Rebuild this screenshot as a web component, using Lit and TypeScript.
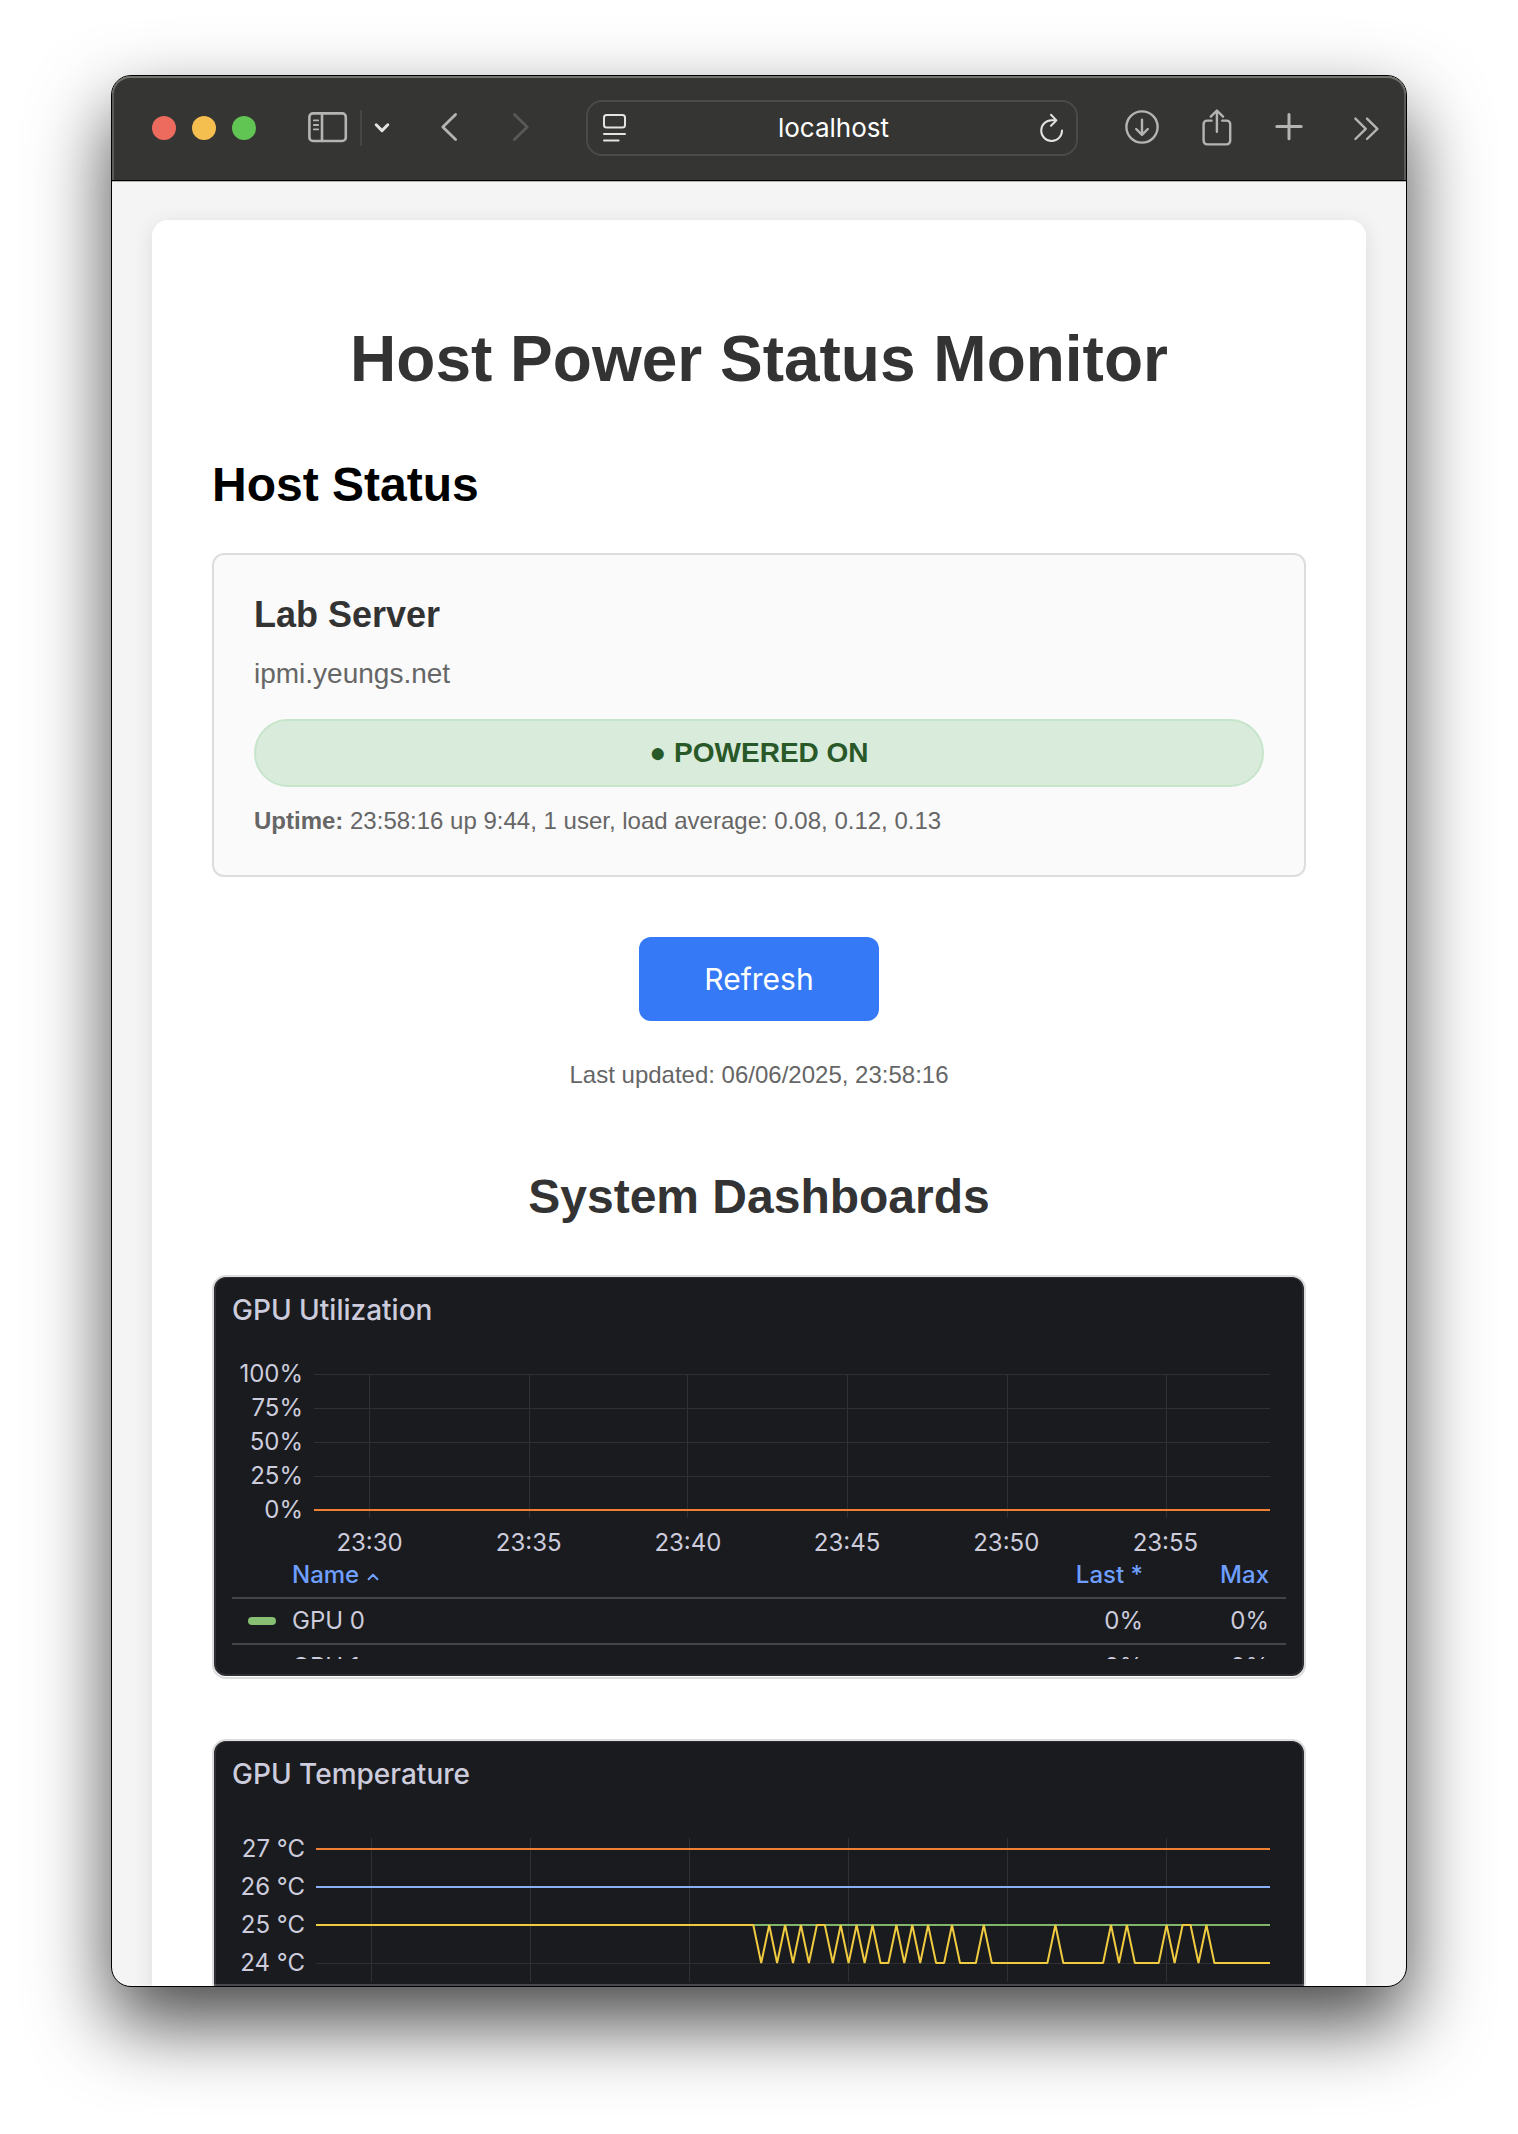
import { LitElement, html, css, svg } from "lit";
import { customElement, property } from "lit/decorators.js";

const TIMES = ["23:30", "23:35", "23:40", "23:45", "23:50", "23:55"];

/* One sample every 15 seconds; these samples read 25 °C after the first drop. */
const STEP = 7.95;
const DROP_START = 55;
const LAST_SAMPLE = 65;
const WARM = new Set([0, 2, 4, 6, 8, 9, 11, 13, 15, 18, 20, 22, 25, 29, 38, 45, 47, 52, 54, 55, 57]);

const temperaturePoints = (warmY: number, coolY: number): string => {
  const points = [`0,${warmY}`];
  for (let i = 0; i <= LAST_SAMPLE; i++) {
    const x = (DROP_START + i) * STEP;
    points.push(`${x.toFixed(1)},${WARM.has(i) ? warmY : coolY}`);
  }
  return points.join(" ");
};

@customElement("browser-toolbar")
export class BrowserToolbar extends LitElement {
  static styles = css`
    :host {
      display: block;
    }
    .bar {
      display: flex;
      align-items: center;
      height: 104px;
      padding: 0 26px 0 40px;
      background: #353533;
      border-bottom: 1px solid #000;
      box-shadow: inset 0 2px 0 #74746f, inset 2px 0 0 #5b5b59, inset -2px 0 0 #5b5b59;
      border-radius: 19px 19px 0 0;
    }
    .lights {
      display: flex;
      gap: 16px;
    }
    .light {
      width: 24px;
      height: 24px;
      border-radius: 50%;
      background: #ed6a5f;
    }
    .light.minimize {
      background: #f5bf4f;
    }
    .light.maximize {
      background: #61c554;
    }
    button {
      display: flex;
      padding: 0;
      border: 0;
      background: none;
      color: #b4b4b2;
      flex: none;
    }
    svg {
      display: block;
      fill: none;
      stroke: currentColor;
      stroke-linecap: round;
      stroke-linejoin: round;
    }
    .group {
      display: flex;
      align-items: center;
      margin-left: 52px;
    }
    .divider {
      width: 2px;
      height: 36px;
      margin: 0 12px;
      background: #464644;
    }
    .bright {
      color: #e3e3e1;
    }
    .nav {
      display: flex;
      gap: 54px;
      margin-left: 50px;
    }
    .nav button:disabled {
      color: #595957;
    }
    .address {
      display: flex;
      align-items: center;
      flex: 1;
      min-width: 0;
      height: 56px;
      box-sizing: border-box;
      margin: 0 47px 0 56px;
      padding: 0 11px 0 14px;
      border: 2px solid #4b4b49;
      border-radius: 16px;
    }
    .address input {
      flex: 1;
      min-width: 0;
      padding: 0;
      border: 0;
      outline: 0;
      background: none;
      color: #fff;
      font: 400 26px/32px Inter, sans-serif;
      text-align: center;
    }
    .actions {
      display: flex;
      align-items: center;
      gap: 43px;
    }
  `;

  render() {
    return html`
      <header class="bar">
        <div class="lights">
          <button class="light" aria-label="Close"></button>
          <button class="light minimize" aria-label="Minimize"></button>
          <button class="light maximize" aria-label="Zoom"></button>
        </div>
        <div class="group">
          <button aria-label="Sidebar">
            <svg width="40" height="32" viewBox="0 0 40 32" stroke-width="2.6">
              <rect x="1.4" y="1.4" width="36.4" height="27.6" rx="3.6" />
              <path d="M14 1.4v27.6" />
              <path stroke-width="1.8" d="M5.8 8.4h4.4M5.8 13h4.4M5.8 17.4h4.4" />
            </svg>
          </button>
          <span class="divider"></span>
          <button class="bright" aria-label="Tab groups">
            <svg width="16" height="12" viewBox="0 0 16 12" stroke-width="3">
              <path d="M2.2 2.8L8 8.6l5.8-5.8" />
            </svg>
          </button>
        </div>
        <div class="nav">
          <button aria-label="Back">
            <svg width="18" height="32" viewBox="0 0 18 32" stroke-width="2.8">
              <path d="M15.6 2.4L2.8 15l12.8 12.6" />
            </svg>
          </button>
          <button aria-label="Forward" disabled>
            <svg width="18" height="32" viewBox="0 0 18 32" stroke-width="2.8">
              <path d="M2.4 2.4L15.2 15 2.4 27.6" />
            </svg>
          </button>
        </div>
        <div class="address">
          <button class="bright" aria-label="Page settings">
            <svg width="26" height="30" viewBox="0 0 26 30" stroke-width="2">
              <rect x="2" y="2" width="21" height="12.6" rx="2.6" />
              <path d="M2 21h21M2 27.4h14.6" />
            </svg>
          </button>
          <input type="text" aria-label="Address" .value=${"localhost"} />
          <button class="bright" aria-label="Reload">
            <svg width="26" height="30" viewBox="0 0 26 30" stroke-width="2">
              <path d="M23 17.4A10.4 10.4 0 1 1 12.6 7.2h4" />
              <path d="M12 1.8l5.4 5.6-5.4 5.4" />
            </svg>
          </button>
        </div>
        <div class="actions">
          <button aria-label="Downloads">
            <svg width="34" height="36" viewBox="0 0 34 36" stroke-width="2.4">
              <circle cx="17" cy="17" r="15.6" />
              <path d="M17 9.6v14.8M11.2 19l5.8 5.8 5.8-5.8" />
            </svg>
          </button>
          <button aria-label="Share">
            <svg width="30" height="38" viewBox="0 0 30 38" stroke-width="2.4">
              <path d="M9.6 11.6H5.2a3.6 3.6 0 0 0-3.6 3.6v16.6a3.6 3.6 0 0 0 3.6 3.6h19.4a3.6 3.6 0 0 0 3.6-3.6V15.2a3.6 3.6 0 0 0-3.6-3.6h-4.4" />
              <path d="M14.9 22.8V2M8.8 7.6l6.1-6.1 6.1 6.1" />
            </svg>
          </button>
          <button aria-label="New tab">
            <svg width="28" height="30" viewBox="0 0 28 30" stroke-width="3">
              <path d="M14 1.6v24.2M1.8 13.6h24.400" />
            </svg>
          </button>
          <button aria-label="More">
            <svg width="34" height="26" viewBox="0 0 34 26" stroke-width="2.4">
              <path d="M9.4 3.600l10.400 10.200L9.400 24M21 3.600l10.400 10.200L21 24" />
            </svg>
          </button>
        </div>
      </header>
    `;
  }
}

@customElement("dashboard-panel")
export class DashboardPanel extends LitElement {
  @property() heading = "";

  static styles = css`
    :host {
      display: block;
      border: 2px solid #ddd;
      border-radius: 14px;
      padding-bottom: 1px;
      background: #fff;
    }
    .panel {
      background: #1a1b1f;
      border: 2px solid #2e2f34;
      border-top-width: 1px;
      border-radius: 12px;
      overflow: hidden;
    }
    .heading {
      margin: 0;
      padding: 0 16px;
      color: #ccccdc;
      font: 500 28px/64px Inter, sans-serif;
    }
  `;

  render() {
    return html`
      <section class="panel">
        <h3 class="heading">${this.heading}</h3>
        <slot></slot>
      </section>
    `;
  }
}

@customElement("utilization-chart")
export class UtilizationChart extends LitElement {
  static styles = css`
    :host {
      display: block;
      color: #ccccdc;
      font: 400 24px/34px Inter, sans-serif;
      padding-bottom: 15px;
    }
    .plot {
      display: grid;
      grid-template-columns: 87px 1fr;
      column-gap: 11px;
      padding: 15px 32px 0 0;
    }
    .scale {
      display: flex;
      flex-direction: column;
      text-align: right;
    }
    .graph {
      display: block;
      width: 100%;
      height: 145px;
      margin-top: 17px;
    }
    .graph * {
      vector-effect: non-scaling-stroke;
    }
    .times {
      grid-column: 2;
      display: grid;
      grid-template-columns: repeat(6, 1fr);
      margin: 0 25px 0 -24px;
      padding-top: 1px;
      line-height: 30px;
      text-align: center;
    }
    .legend {
      height: 101px;
      margin: 0 16px;
      overflow: hidden;
    }
    table {
      width: 100%;
      border-collapse: separate;
      border-spacing: 0;
    }
    th,
    td {
      padding: 0 17px 1px 0;
      border-bottom: 2px solid #44454a;
      font-weight: 400;
      line-height: 43px;
      text-align: right;
    }
    thead th {
      padding-bottom: 5px;
      color: #6e9fff;
      font-weight: 500;
      line-height: 34px;
    }
    .name {
      display: flex;
      align-items: center;
      text-align: left;
    }
    thead .name {
      padding-left: 60px;
    }
    tbody .name {
      padding-left: 16px;
    }
    .swatch {
      width: 28px;
      height: 8px;
      margin-right: 16px;
      border-radius: 4px;
      background: #87bf73;
    }
    .swatch.second {
      background: #e8c33a;
    }
    .last {
      width: 110px;
    }
    .max {
      width: 109px;
    }
    .arrow {
      margin: 4px 0 0 8px;
    }
  `;

  render() {
    return html`
      <div class="plot">
        <div class="scale">
          ${["100%", "75%", "50%", "25%", "0%"].map((label) => html`<span>${label}</span>`)}
        </div>
        <svg class="graph" viewBox="0 0 956 145" preserveAspectRatio="none" role="img" aria-label="GPU utilization over time">
          <g stroke="#2f3034" fill="none">
            ${[0.5, 34.5, 68.5, 102.5].map((y) => svg`<path d="M0 ${y}H956" />`)}
            ${[55.5, 215.5, 373.5, 533.5, 693.5, 852.5].map((x) => svg`<path d="M${x} 0V144" />`)}
          </g>
          <path d="M0 136H956" stroke="#f08033" stroke-width="2" />
        </svg>
        <div class="times">${TIMES.map((time) => html`<span>${time}</span>`)}</div>
      </div>
      <div class="legend">
        <table>
          <thead>
            <tr>
              <th class="name">
                Name
                <svg class="arrow" width="12" height="8" viewBox="0 0 12 8" fill="none" stroke="currentColor" stroke-width="2" stroke-linecap="round" stroke-linejoin="round">
                  <path d="M1.6 6.200L6 1.800l4.400 4.400" />
                </svg>
              </th>
              <th class="last">Last *</th>
              <th class="max">Max</th>
            </tr>
          </thead>
          <tbody>
            <tr>
              <td class="name"><span class="swatch"></span>GPU 0</td>
              <td>0%</td>
              <td>0%</td>
            </tr>
            <tr>
              <td class="name"><span class="swatch second"></span>GPU 1</td>
              <td>0%</td>
              <td>0%</td>
            </tr>
          </tbody>
        </table>
      </div>
    `;
  }
}

@customElement("temperature-chart")
export class TemperatureChart extends LitElement {
  static styles = css`
    :host {
      display: block;
      color: #ccccdc;
      font: 400 24px/38px Inter, sans-serif;
      padding-bottom: 154px;
    }
    .plot {
      display: grid;
      grid-template-columns: 89px 1fr;
      column-gap: 11px;
      padding: 24px 32px 0 0;
    }
    .scale {
      display: flex;
      flex-direction: column;
      text-align: right;
    }
    .graph {
      display: block;
      width: 100%;
      height: 144px;
      margin-top: 8px;
    }
    .graph * {
      vector-effect: non-scaling-stroke;
    }
  `;

  render() {
    return html`
      <div class="plot">
        <div class="scale">
          ${[27, 26, 25, 24].map((degrees) => html`<span>${degrees} °C</span>`)}
        </div>
        <svg class="graph" viewBox="0 0 954 144" preserveAspectRatio="none" role="img" aria-label="GPU temperature over time">
          <g stroke="#2f3034" fill="none">
            <path d="M0 125.5H954" />
            ${[55.5, 214.5, 373.5, 532.5, 691.5, 850.5].map((x) => svg`<path d="M${x} 0V144" />`)}
          </g>
          <g fill="none" stroke-width="2">
            <path d="M0 11H954" stroke="#f08033" />
            <path d="M0 49H954" stroke="#8ab0f8" />
            <path d="M0 87H954" stroke="#82b56c" />
            <polyline points=${temperaturePoints(87, 125)} stroke="#f0cb40" stroke-linejoin="bevel" />
          </g>
        </svg>
      </div>
    `;
  }
}

@customElement("app-root")
export class AppRoot extends LitElement {
  static styles = css`
    :host {
      display: block;
      background: #fff;
      font-family: "Liberation Sans", Arial, sans-serif;
    }
    .desktop {
      display: flex;
      height: 100vh;
      box-sizing: border-box;
      padding: 75px 111px 147px;
      overflow: hidden;
    }
    .window {
      position: relative;
      display: flex;
      flex-direction: column;
      flex: 1;
      min-width: 0;
      border: 1px solid #000;
      border-radius: 20px;
      overflow: hidden;
      background: #f4f4f4;
      box-shadow: 0 36px 78px rgba(0, 0, 0, 0.72);
    }
    /* Light rim along the lower edge of the window, over the page. */
    .window::after {
      content: "";
      position: absolute;
      inset: auto 0 0;
      height: 2px;
      background: rgba(255, 255, 255, 0.2);
    }
    .viewport {
      flex: 1;
      min-height: 0;
      padding: 38px 40px 0;
      overflow: hidden;
      border-top: 1px solid #b2b2b2;
    }
    .sheet {
      padding: 102px 60px 60px;
      border-radius: 16px;
      background: #fff;
      box-shadow: 0 4px 20px rgba(0, 0, 0, 0.1);
    }
    h1,
    h2,
    h3,
    p {
      margin: 0;
    }
    h1 {
      color: #333;
      font-size: 64px;
      line-height: 74px;
      text-align: center;
    }
    h2 {
      color: #000;
      font-size: 48px;
      line-height: 56px;
    }
    .status-title {
      margin: 61px 0 40px;
    }
    .host {
      padding: 40px;
      border: 2px solid #ddd;
      border-radius: 12px;
      background: #fafafa;
    }
    .host-name {
      color: #333;
      font-size: 36px;
      line-height: 40px;
    }
    .host-address {
      margin: 23px 0 29px;
      color: #666;
      font-size: 28px;
      line-height: 32px;
    }
    .power {
      padding: 16px;
      border: 2px solid #c7e5cb;
      border-radius: 34px;
      background: #d9ebdb;
      color: #295829;
      font-size: 28px;
      font-weight: 700;
      line-height: 32px;
      text-align: center;
    }
    .note {
      color: #666;
      font-size: 24px;
      line-height: 28px;
    }
    .uptime {
      margin-top: 20px;
    }
    .refresh {
      display: block;
      min-width: 240px;
      margin: 60px auto 40px;
      padding: 22px 60px;
      border: 0;
      border-radius: 12px;
      background: #3579f6;
      color: #fff;
      font: 400 30px/40px Inter, sans-serif;
    }
    .updated {
      text-align: center;
    }
    .dashboards-title {
      margin: 80px 0 50px;
      color: #333;
      text-align: center;
    }
    .panels {
      display: grid;
      gap: 60px;
    }
  `;

  render() {
    return html`
      <div class="desktop">
        <div class="window">
          <browser-toolbar></browser-toolbar>
          <div class="viewport">
            <main class="sheet">
              <h1>Host Power Status Monitor</h1>
              <h2 class="status-title">Host Status</h2>
              <section class="host">
                <h3 class="host-name">Lab Server</h3>
                <p class="host-address">ipmi.yeungs.net</p>
                <p class="power">● POWERED ON</p>
                <p class="note uptime"><strong>Uptime:</strong> 23:58:16 up 9:44, 1 user, load average: 0.08, 0.12, 0.13</p>
              </section>
              <button class="refresh">Refresh</button>
              <p class="note updated">Last updated: 06/06/2025, 23:58:16</p>
              <h2 class="dashboards-title">System Dashboards</h2>
              <div class="panels">
                <dashboard-panel heading="GPU Utilization">
                  <utilization-chart></utilization-chart>
                </dashboard-panel>
                <dashboard-panel heading="GPU Temperature">
                  <temperature-chart></temperature-chart>
                </dashboard-panel>
              </div>
            </main>
          </div>
        </div>
      </div>
    `;
  }
}
